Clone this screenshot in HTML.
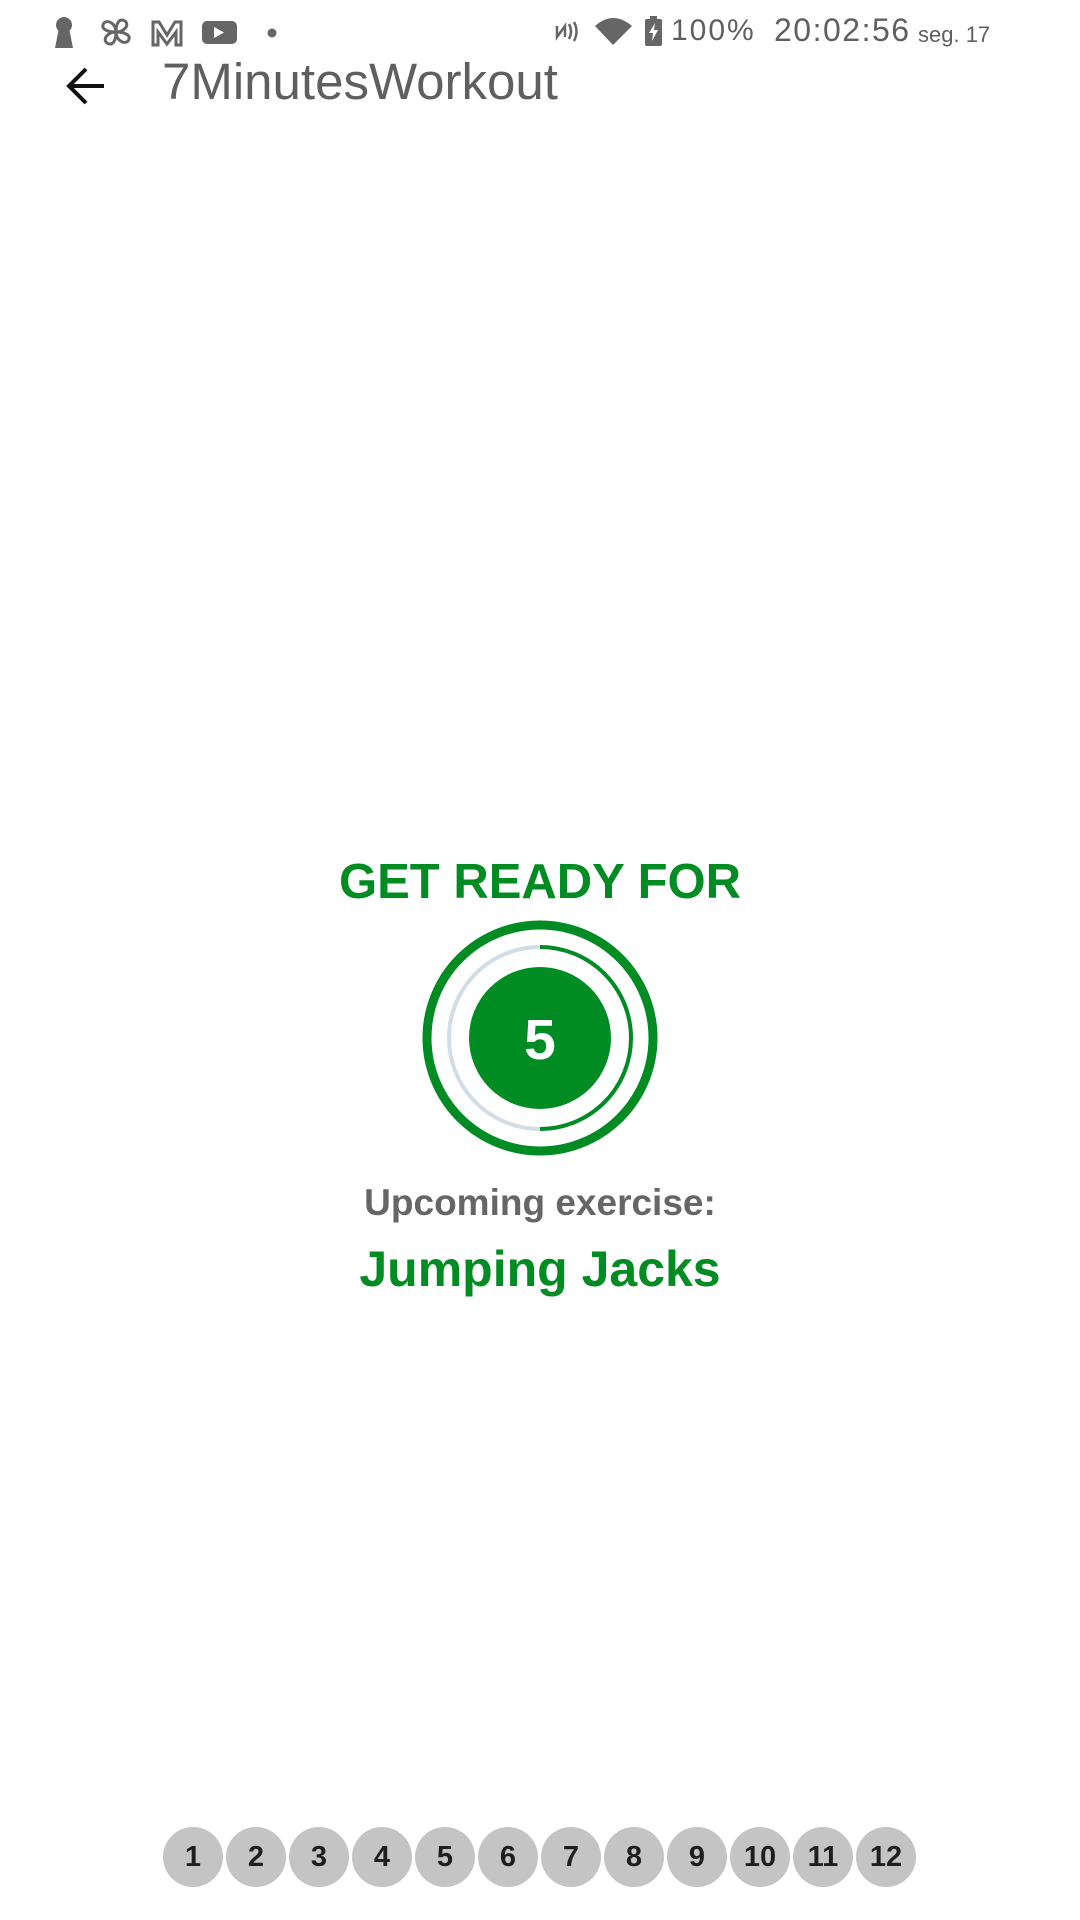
<!DOCTYPE html>
<html><head><meta charset="utf-8"><style>
html,body{margin:0;padding:0;width:1080px;height:1920px;background:#fff;overflow:hidden;font-family:"Liberation Sans",sans-serif;}
.abs{position:absolute;}
.st{color:#5f5f5f;font-size:30px;top:14px;white-space:nowrap;letter-spacing:2px;}
.dots{position:absolute;top:1827px;left:163px;}
.d{position:absolute;top:0;width:60px;height:60px;border-radius:50%;background:#c4c4c4;color:#1e1e1e;font-weight:bold;font-size:29px;line-height:60px;text-align:center;}
.c{position:absolute;left:0;width:1080px;text-align:center;white-space:nowrap;}
</style></head><body>
<svg class="abs" style="left:0;top:0" width="1080" height="60">
 <g fill="#666">
  <circle cx="64" cy="25" r="8"/><path d="M59 28 L69 28 L73 48 L55 48 Z"/>
  <circle cx="272" cy="33" r="4.5"/>
  <rect x="202" y="21" width="35" height="23" rx="5"/>
 </g>
 <path d="M214 27 L214 38 L224 32.5 Z" fill="#fff"/>
 <g fill="none" stroke="#666" stroke-width="3">
  <path d="M116 32 C106 32 100 28 104 23 C108 19 116 24 116 32 C116 22 120 18 125 21 C130 25 124 32 116 32 C126 32 132 36 128 41 C124 45 116 40 116 32 C116 42 112 46 107 43 C102 39 108 32 116 32 Z"/>
  <path d="M153 45 L153 22 L159 22 L167 35 L175 22 L181 22 L181 45 L176 45 L176 32 L167 44 L158 32 L158 45 Z"/>
  <path d="M557 26 L557 37 L565 26 L565 37" stroke-width="2.5"/>
  <path d="M569 24 Q573 31.5 569 39 M574 22 Q579 31.5 574 41" stroke-width="2.5"/>
 </g>
 <path d="M595 26 Q613 10 632 26 L613 45 Z" fill="#666"/>
 <rect x="645" y="19" width="17" height="27" rx="2" fill="#666"/><rect x="650" y="16" width="7" height="4" fill="#666"/>
 <path d="M655 23 L649 33 L653 33 L652 41 L658 30 L654 30 Z" fill="#fff"/>
</svg>
<div class="abs st" style="left:671px">100%</div>
<div class="abs st" style="left:774px;font-size:32px;top:12px;letter-spacing:1.5px">20:02:56</div>
<div class="abs st" style="left:918px;font-size:22px;top:22px;letter-spacing:0">seg. 17</div>
<svg class="abs" style="left:62px;top:64px" width="48" height="44"><path d="M42 22 L8 22 M24 5 L7 22 L24 39" fill="none" stroke="#111" stroke-width="4"/></svg>
<div class="abs" style="left:162px;top:52px;font-size:51px;color:#5f5f5f;">7MinutesWorkout</div>
<div class="c" style="top:854px;font-size:49px;font-weight:bold;color:#008c23;">GET READY FOR</div>
<svg class="abs" style="left:420px;top:918px" width="240" height="240">
 <circle cx="120" cy="120" r="113" fill="none" stroke="#008c23" stroke-width="9"/>
 <circle cx="120" cy="120" r="91" fill="none" stroke="#d3dde6" stroke-width="4"/>
 <path d="M120 29 A91 91 0 0 1 120 211" fill="none" stroke="#008c23" stroke-width="4"/>
 <circle cx="120" cy="120" r="71" fill="#008c23"/>
 <text x="120" y="141" text-anchor="middle" font-family="Liberation Sans" font-weight="bold" font-size="57" fill="#fff">5</text>
</svg>
<div class="c" style="top:1182px;font-size:37px;font-weight:bold;color:#666;">Upcoming exercise:</div>
<div class="c" style="top:1240px;font-size:50px;font-weight:bold;color:#008c23;">Jumping Jacks</div>
<div class="dots">
<div class="d" style="left:0">1</div><div class="d" style="left:63px">2</div><div class="d" style="left:126px">3</div><div class="d" style="left:189px">4</div><div class="d" style="left:252px">5</div><div class="d" style="left:315px">6</div><div class="d" style="left:378px">7</div><div class="d" style="left:441px">8</div><div class="d" style="left:504px">9</div><div class="d" style="left:567px">10</div><div class="d" style="left:630px">11</div><div class="d" style="left:693px">12</div>
</div>
</body></html>
